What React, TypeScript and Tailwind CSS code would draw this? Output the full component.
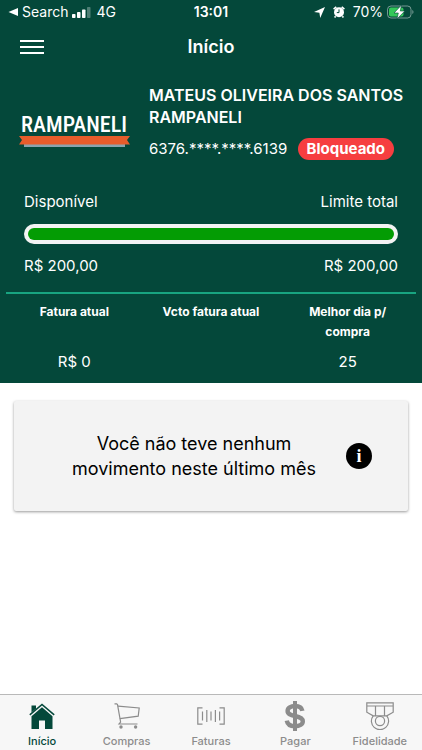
import React from 'react';

interface Tab {
  label: string;
  icon: React.ReactNode;
  active?: boolean;
}

interface InvoiceColumn {
  title: string;
  value: string;
}

const account = {
  holder: 'MATEUS OLIVEIRA DOS SANTOS RAMPANELI',
  card: '6376.****.****.6139',
  status: 'Bloqueado',
  available: 200,
  limit: 200,
};

const invoice: InvoiceColumn[] = [
  { title: 'Fatura atual', value: 'R$ 0' },
  { title: 'Vcto fatura atual', value: '' },
  { title: 'Melhor dia p/ compra', value: '25' },
];

const formatMoney = (value: number) => `R$ ${value.toFixed(2).replace('.', ',')}`;

const HomeIcon = () => (
  <svg width="26" height="26" viewBox="0 0 26 26" fill="currentColor" aria-hidden="true">
    <path d="M2.5 2.5H7v3.3L2.5 9.6z" />
    <path d="M13 .4.3 11.3l1 1.2L13 2.6l11.7 9.9 1-1.2z" />
    <path d="M13 4.2 2.5 13.2V26H10v-8.5h6V26h7.5V13.2z" />
  </svg>
);

const CartIcon = () => (
  <svg width="26" height="26" viewBox="0 0 26 26" fill="none" stroke="currentColor" strokeWidth="1.2" aria-hidden="true">
    <path d="M.5.8h2.2l.8.8L6.6 19 5 21h18.5" />
    <path d="M4 3.2 25.2 5l-1 8.2L5.8 15.6" />
    <circle cx="7" cy="24" r="1.7" fill="currentColor" stroke="none" />
    <circle cx="21.6" cy="24" r="1.7" fill="currentColor" stroke="none" />
  </svg>
);

const BarcodeIcon = () => (
  <svg width="28" height="18" viewBox="0 0 28 18" fill="none" stroke="currentColor" strokeWidth="1.2" aria-hidden="true">
    <path d="M5.5.8H.8v16.4h4.7M22.5.8h4.7v16.4h-4.7" />
    <path d="M5.5 4.5v9M9.8 3v12M14 4.5v9M18.4 3v12M22.6 4.5v9" />
  </svg>
);

const DollarIcon = () => (
  <svg width="22" height="30" viewBox="0 0 22 30" fill="none" stroke="currentColor" aria-hidden="true">
    <path d="M11 0v30" strokeWidth="4" />
    <path
      d="M18.4 9.8C17.8 6.6 15 5 11 5 6.8 5 3.6 6.8 3.6 9.9c0 3.3 3.2 4.2 7.4 5.1 4.4.9 7.8 1.9 7.8 5.3 0 3.2-3.3 4.9-7.8 4.9-4.7 0-7.6-2-8.2-5.6"
      strokeWidth="4.4"
    />
  </svg>
);

const MedalIcon = () => (
  <svg width="28" height="28" viewBox="0 0 28 28" fill="none" stroke="currentColor" strokeWidth="1.2" aria-hidden="true">
    <path d="M.8.8h26.4v9.4l-6.4 3.6H7.2L.8 10.2zM.8 4h26.4M9.5 4v9.6M18.5 4v9.6" />
    <path d="M7.2 13.8a8.6 8.6 0 1 0 13.6 0" />
    <circle cx="14" cy="19" r="4.6" />
  </svg>
);

const tabs: Tab[] = [
  { label: 'Início', icon: <HomeIcon />, active: true },
  { label: 'Compras', icon: <CartIcon /> },
  { label: 'Faturas', icon: <BarcodeIcon /> },
  { label: 'Pagar', icon: <DollarIcon /> },
  { label: 'Fidelidade', icon: <MedalIcon /> },
];

const Logo = () => (
  <svg className="shrink-0" width="112" height="38" viewBox="0 0 112 38" role="img" aria-label="Rampaneli">
    <text
      x="55"
      y="22"
      textAnchor="middle"
      fill="#fff"
      className="font-['Roboto_Condensed','Liberation_Sans_Narrow','Liberation_Sans',sans-serif] text-[22px] font-medium"
    >
      RAMPANELI
    </text>
    <path d="M5 34h101v3H5z" fill="#8ba3ad" />
    <path d="M0 26h111l-3 4 3 4.5H0L3 30z" fill="#e85c2b" />
  </svg>
);

const StatusBar = () => (
  <div className="grid h-6 grid-cols-3 items-center px-2 text-sm">
    <div className="flex items-center gap-1">
      <svg width="10" height="10" viewBox="0 0 10 10" fill="currentColor" aria-hidden="true">
        <path d="M10 1v8L.5 5z" />
      </svg>
      <span>Search</span>
      <svg width="20" height="11" viewBox="0 0 20 11" fill="currentColor" aria-hidden="true">
        <rect x="0" y="7" width="3.5" height="4" rx=".8" />
        <rect x="5" y="5" width="3.5" height="6" rx=".8" />
        <rect x="10" y="2.5" width="3.5" height="8.5" rx=".8" />
        <rect x="15" y="0" width="3.5" height="11" rx=".8" opacity=".3" />
      </svg>
      <span>4G</span>
    </div>
    <span className="text-center font-semibold">13:01</span>
    <div className="flex items-center justify-end gap-1">
      <svg width="11" height="11" viewBox="0 0 11 11" fill="currentColor" aria-hidden="true">
        <path d="M11 0 6.2 11 5.4 5.8 0 5z" />
      </svg>
      <svg className="mx-1" width="12" height="12" viewBox="0 0 12 12" aria-hidden="true">
        <circle cx="6" cy="6.3" r="5" fill="currentColor" />
        <path d="M.6 3.2 3.3.9M11.4 3.2 8.7.9M2.6 10.2l-1 1.3M9.4 10.2l1 1.3" stroke="currentColor" strokeWidth="1.6" />
        <path d="M6 3.4v3.2H3.8" fill="none" stroke="#04483a" />
      </svg>
      <span>70%</span>
      <svg width="27" height="14" viewBox="0 0 27 14" aria-hidden="true">
        <rect x=".5" y="1" width="23.5" height="12" rx="3.5" fill="none" stroke="#fff" opacity=".45" />
        <path d="M25.3 5v4c1.6-.6 1.6-3.4 0-4" fill="#fff" opacity=".45" />
        <rect x="2" y="2.5" width="14.5" height="9" rx="2" fill="#33c759" />
        <path d="M14.5 0 7 8h4.3L10 14l7.8-8h-4.5z" fill="#fff" stroke="#04483a" strokeWidth=".6" />
      </svg>
    </div>
  </div>
);

export default function App() {
  const percent = (account.available / account.limit) * 100;

  return (
    <div className="flex min-h-screen flex-col bg-white font-['Inter',sans-serif] text-base">
      <header className="bg-[#04483a] text-white">
        <StatusBar />

        <div className="grid h-[46px] grid-cols-3 items-center px-5">
          <button type="button" aria-label="Menu" className="w-6">
            <svg width="24" height="14" viewBox="0 0 24 14" stroke="currentColor" strokeWidth="2" aria-hidden="true">
              <path d="M0 1h24M0 7h24M0 13h24" />
            </svg>
          </button>
          <h1 className="text-center text-lg font-semibold">Início</h1>
        </div>

        <section className="flex items-end gap-[18px] pt-[14px] pr-4 pl-[19px]">
          <div className="pb-3">
            <Logo />
          </div>
          <div className="flex-1">
            <p className="leading-[22px] font-semibold">{account.holder}</p>
            <div className="mt-[10px] flex items-center justify-between pr-3 text-[15px] leading-[22px]">
              <span>{account.card}</span>
              <span className="rounded-full bg-[#f63e40] px-[9px] font-bold">{account.status}</span>
            </div>
          </div>
        </section>

        <section className="px-6 pt-[30px] pb-[14px] text-[15px] leading-6">
          <div className="flex justify-between">
            <span>Disponível</span>
            <span>Limite total</span>
          </div>
          <div
            role="progressbar"
            aria-label="Limite disponível"
            aria-valuenow={percent}
            className="my-[10px] h-5 rounded-full bg-[#f3f3f3] p-1"
          >
            <div className="h-3 rounded-full bg-[#049c04]" style={{ width: `${percent}%` }} />
          </div>
          <div className="flex justify-between">
            <span>{formatMoney(account.available)}</span>
            <span>{formatMoney(account.limit)}</span>
          </div>
        </section>

        <div className="mx-[6px] border-t-2 border-[#18a581] pt-2 pb-[9px]">
          <table className="w-full table-fixed text-center">
            <thead>
              <tr className="align-top text-xs leading-5">
                {invoice.map((col) => (
                  <th key={col.title} className="px-4 font-bold">
                    {col.title}
                  </th>
                ))}
              </tr>
            </thead>
            <tbody>
              <tr className="text-[15px] leading-6">
                {invoice.map((col) => (
                  <td key={col.title} className="pt-2">
                    {col.value}
                  </td>
                ))}
              </tr>
            </tbody>
          </table>
        </div>
      </header>

      <main className="flex-1 px-[14px] pt-[18px]">
        <div className="flex items-center rounded-xs bg-[#f3f3f3] py-[30px] pr-9 pl-7 shadow-[0_1px_3px_rgba(0,0,0,0.4)]">
          <p className="flex-1 text-center text-lg leading-[25px] text-black">
            Você não teve nenhum
            <br />
            movimento neste último mês
          </p>
          <button
            type="button"
            aria-label="Informações"
            className="size-[26px] rounded-full bg-black font-['Liberation_Serif',serif] text-lg leading-[26px] font-bold text-white"
          >
            i
          </button>
        </div>
      </main>

      <nav className="grid grid-cols-5 border-t border-[#b9b9b9] bg-[#f7f7f7]">
        {tabs.map((tab) => (
          <a
            key={tab.label}
            href="#"
            aria-current={tab.active ? 'page' : undefined}
            className={`flex flex-col items-center pt-[6px] pb-px text-[11px] leading-4 font-medium ${
              tab.active ? 'text-[#04483a]' : 'text-[#8c8c8c]'
            }`}
          >
            <span className="mb-[2px] flex h-[30px] items-center">{tab.icon}</span>
            {tab.label}
          </a>
        ))}
      </nav>
    </div>
  );
}
